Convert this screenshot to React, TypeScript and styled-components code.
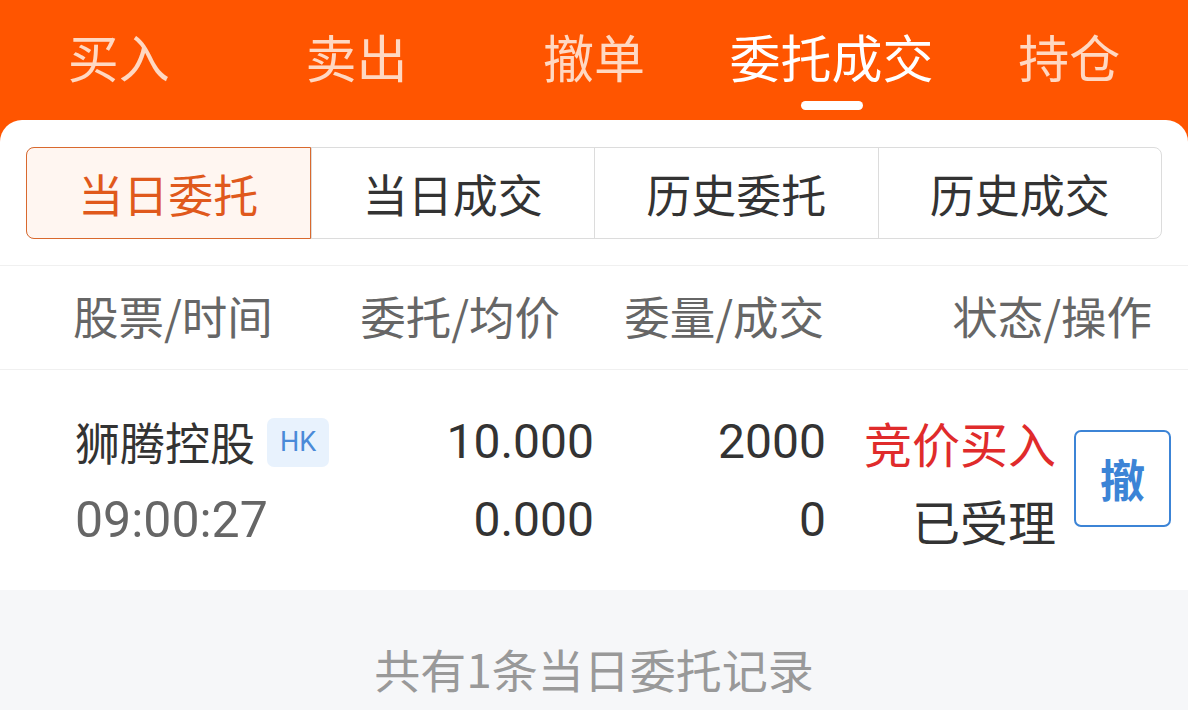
import styled, { createGlobalStyle } from "styled-components";

const GlobalStyle = createGlobalStyle`
  html, body {
    margin: 0;
    padding: 0;
    background: #f6f7f9;
  }
  body {
    font-family: Roboto, "Noto Sans CJK SC", sans-serif;
  }
`;

const Page = styled.div`
  width: 1188px;
  height: 710px;
  overflow: hidden;
  background: #ff5500;
`;

const TopTabs = styled.nav`
  display: grid;
  grid-template-columns: repeat(5, 1fr);
  height: 120px;
`;

const TopTab = styled.div<{ $active?: boolean }>`
  position: relative;
  display: flex;
  justify-content: center;
  padding-top: 26px;
  font-family: "Noto Sans CJK SC", sans-serif;
  font-size: 51px;
  line-height: 60px;
  color: ${(p) => (p.$active ? "#ffffff" : "#ffd8c2")};

  &::after {
    content: "";
    display: ${(p) => (p.$active ? "block" : "none")};
    position: absolute;
    left: 50%;
    top: 101px;
    width: 62px;
    height: 9px;
    margin-left: -31px;
    border-radius: 5px;
    background: #ffffff;
  }
`;

const Card = styled.div`
  background: #ffffff;
  border-radius: 22px 22px 0 0;
`;

const SegmentWrap = styled.div`
  padding: 27px 26px 26px;
  border-bottom: 1px solid #f0f0f0;
`;

const Segments = styled.div`
  display: grid;
  grid-template-columns: repeat(4, 1fr);
  height: 90px;
  border: 1px solid #dcdcdc;
  border-radius: 8px;
`;

const Segment = styled.div<{ $active?: boolean }>`
  display: flex;
  align-items: center;
  justify-content: center;
  font-family: "Noto Sans CJK SC", sans-serif;
  font-size: 45px;
  color: ${(p) => (p.$active ? "#e0591c" : "#333333")};
  background: ${(p) => (p.$active ? "#fff6f1" : "transparent")};
  border-left: 1px solid #dcdcdc;
  ${(p) =>
    p.$active &&
    `
    margin: -1px 0 -1px -1px;
    border: 1px solid #d9692e;
    border-radius: 8px 0 0 8px;
  `}
`;

const HeadRow = styled.div`
  display: grid;
  grid-template-columns: 300px 219px 232px 1fr;
  align-items: center;
  height: 104px;
  padding: 0 36px 6px 73px;
  box-sizing: border-box;
  border-bottom: 1px solid #f0f0f0;
  font-family: "Noto Sans CJK SC", sans-serif;
  font-size: 45.5px;
  color: #666666;
`;

const HeadCell = styled.div<{ $align?: "left" | "right"; $inset?: boolean }>`
  text-align: ${(p) => p.$align ?? "right"};
  white-space: nowrap;
  ${(p) => p.$inset && "margin-left: -40px; padding-right: 32px;"}
`;

const DataRow = styled.div`
  display: grid;
  grid-template-columns: 300px 219px 232px 1fr;
  align-items: center;
  padding: 33px 17px 31px 75px;
  line-height: 78px;
  color: #333333;
`;

const Cell = styled.div<{ $align?: "left" | "right" }>`
  display: flex;
  flex-direction: column;
  align-items: ${(p) => (p.$align === "left" ? "flex-start" : "flex-end")};
  white-space: nowrap;
`;

const Name = styled.div`
  display: flex;
  align-items: center;
  gap: 12px;
  font-family: "Noto Sans CJK SC", sans-serif;
  font-size: 45px;
`;

const Badge = styled.span`
  display: inline-flex;
  align-items: center;
  justify-content: center;
  width: 62px;
  height: 49px;
  border-radius: 7px;
  background: #e8f2fd;
  color: #4a8ad8;
  font-family: Roboto, sans-serif;
  font-size: 27px;
  line-height: 1;
`;

const Num = styled.div<{ $muted?: boolean; $size?: number }>`
  font-family: Roboto, sans-serif;
  font-size: ${(p) => p.$size ?? 48}px;
  color: ${(p) => (p.$muted ? "#666666" : "#333333")};
`;

const StatusWrap = styled.div`
  display: flex;
  align-items: center;
  justify-content: flex-end;
  gap: 18px;
`;

const Status = styled.div<{ $red?: boolean }>`
  font-family: "Noto Sans CJK SC", sans-serif;
  font-size: 48px;
  color: ${(p) => (p.$red ? "#e02b2b" : "#333333")};
`;

const CancelButton = styled.button`
  width: 97px;
  height: 97px;
  margin-bottom: 6px;
  padding: 0;
  border: 2px solid #3c84d6;
  border-radius: 7px;
  background: #ffffff;
  color: #3c84d6;
  font-family: "Noto Sans CJK SC", sans-serif;
  font-size: 45px;
  font-weight: 700;
`;

const Footer = styled.div`
  background: #f6f7f9;
  height: 120px;
  padding-top: 48px;
  box-sizing: border-box;
  text-align: center;
  font-family: "Noto Sans CJK SC", sans-serif;
  font-size: 46px;
  line-height: 60px;
  color: #999999;
`;

const tabs = ["买入", "卖出", "撤单", "委托成交", "持仓"];
const segments = ["当日委托", "当日成交", "历史委托", "历史成交"];

export default function App() {
  return (
    <Page>
      <GlobalStyle />
      <TopTabs>
        {tabs.map((t) => (
          <TopTab key={t} $active={t === "委托成交"}>
            {t}
          </TopTab>
        ))}
      </TopTabs>
      <Card>
        <SegmentWrap>
          <Segments>
            {segments.map((s, i) => (
              <Segment key={s} $active={i === 0}>
                {s}
              </Segment>
            ))}
          </Segments>
        </SegmentWrap>
        <HeadRow>
          <HeadCell $align="left">股票/时间</HeadCell>
          <HeadCell $inset>委托/均价</HeadCell>
          <HeadCell>委量/成交</HeadCell>
          <HeadCell>状态/操作</HeadCell>
        </HeadRow>
        <DataRow>
          <Cell $align="left">
            <Name>
              狮腾控股<Badge>HK</Badge>
            </Name>
            <Num $muted $size={50}>09:00:27</Num>
          </Cell>
          <Cell>
            <Num>10.000</Num>
            <Num>0.000</Num>
          </Cell>
          <Cell>
            <Num>2000</Num>
            <Num>0</Num>
          </Cell>
          <StatusWrap>
            <Cell>
              <Status $red>竞价买入</Status>
              <Status>已受理</Status>
            </Cell>
            <CancelButton>撤</CancelButton>
          </StatusWrap>
        </DataRow>
      </Card>
      <Footer>共有1条当日委托记录</Footer>
    </Page>
  );
}
